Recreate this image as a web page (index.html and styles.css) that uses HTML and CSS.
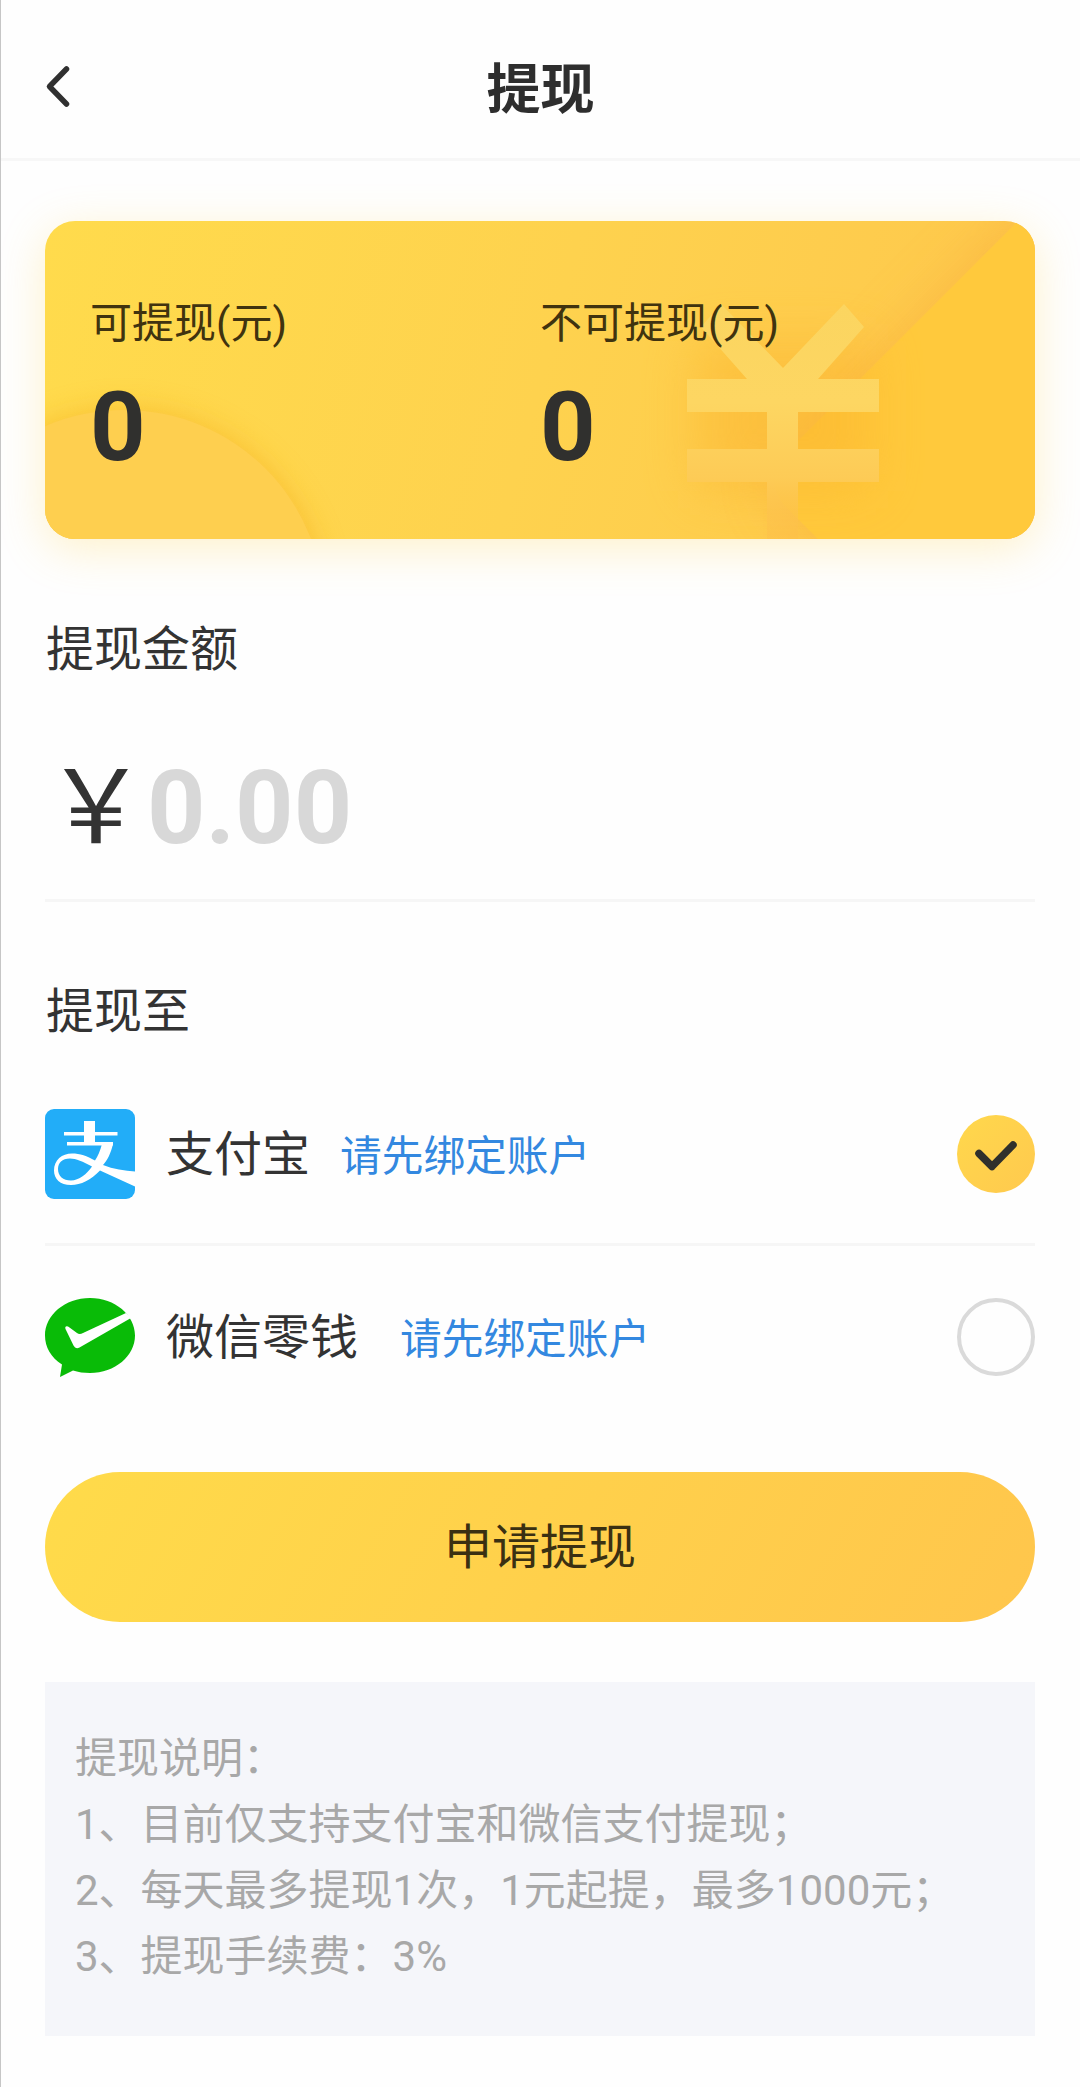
FILE: index.html
```html
<!DOCTYPE html>
<html lang="zh-CN">
<head>
    <meta charset="UTF-8">
    <meta name="viewport" content="width=device-width, initial-scale=1.0">
    <title>提现</title>
    <link rel="stylesheet" href="styles.css">
</head>
<body>
    <header>
        <a href="#" class="back" aria-label="返回">
            <svg width="30" height="46" viewBox="0 0 30 46">
                <path d="M24.500 6 L7.500 23.500 L24.500 41" fill="none" stroke="#303030" stroke-width="5.5" stroke-linecap="round" stroke-linejoin="round"/>
            </svg>
        </a>
        <h1>提现</h1>
    </header>

    <main>
        <section class="balance-card">
            <svg class="card-bg" width="990" height="318" viewBox="0 0 990 318" aria-hidden="true">
                <defs>
                    <linearGradient id="yenFill" x1="0" y1="83" x2="0" y2="318" gradientUnits="userSpaceOnUse">
                        <stop offset="0" stop-color="#fbd560"/>
                        <stop offset="0.42" stop-color="#fdd662"/>
                        <stop offset="0.74" stop-color="#fdcb56"/>
                        <stop offset="1" stop-color="#fdbd48" stop-opacity="0.4"/>
                    </linearGradient>
                    <filter id="soft" x="-30%" y="-30%" width="160%" height="160%">
                        <feGaussianBlur stdDeviation="14"/>
                    </filter>
                    <filter id="wide" x="-40%" y="-40%" width="180%" height="180%">
                        <feGaussianBlur stdDeviation="26"/>
                    </filter>
                    <clipPath id="yen">
                        <polygon points="738,147 799,83 819,106 773,158 702,158 656,106 676,83"/>
                        <rect x="642" y="158" width="192" height="33"/>
                        <rect x="642" y="228" width="192" height="33"/>
                        <rect x="722" y="150" width="31" height="168"/>
                    </clipPath>
                </defs>
                <circle cx="79" cy="389" r="202" fill="#f5ac1c" opacity="0.5" filter="url(#soft)"/>
                <circle cx="79" cy="389" r="200" fill="#fecf4f"/>
                <path d="M970 0 L739 232 Q718 256 739 285 L795 342 L1040 342 L1040 0 Z" fill="#f8a838" opacity="0.5" filter="url(#wide)"/>
                <path d="M973 0 L739 234 Q718 256 739 284 L795 340 L1040 340 L1040 0 Z" fill="#ffc93c"/>
                <rect x="650" y="120" width="176" height="150" fill="#fbb02c" opacity="0.42" filter="url(#wide)"/>
                <rect x="642" y="83" width="192" height="235" fill="url(#yenFill)" clip-path="url(#yen)"/>
            </svg>
            <div class="balance">
                <p>可提现(元)</p>
                <strong>0</strong>
            </div>
            <div class="balance">
                <p>不可提现(元)</p>
                <strong>0</strong>
            </div>
        </section>

        <section class="amount">
            <h2>提现金额</h2>
            <div class="amount-field">
                <span class="currency">￥</span>
                <span class="placeholder">0.00</span>
            </div>
        </section>

        <section class="methods">
            <h2>提现至</h2>
            <div class="method">
                <svg class="method-icon" width="90" height="90" viewBox="0 0 90 90">
                    <rect width="90" height="90" rx="9" fill="#22adf8"/>
                    <path d="M39 12 H50 V35 H39 Z M19 23 H72.5 V26.5 H19 Z M22 33 H68 V36.5 H22 Z" fill="#fff"/>
                    <path d="M57 35 H68 C66 44 62 52 58 56 C68 60 80 62 90 62.500 V77.500 L55 61.500 C46 71 36 76 26 76 C15 76 9 70 9 61.500 C9 51 17 44.500 27 44.500 C35 44.500 42 47 50 51.500 C53 47 55 42 57 35 Z M47 57.500 C38 52.500 31 49.500 25 49.500 C17 49.500 13 54 13 60 C13 67 18 71.500 26 71.500 C34 71.500 42 65 47 57.500 Z" fill="#fff" fill-rule="evenodd"/>
                </svg>
                <span class="method-name">支付宝</span>
                <a href="#" class="bind">请先绑定账户</a>
                <span class="radio checked">
                    <svg width="78" height="78" viewBox="0 0 78 78">
                        <path d="M22 38.500 L35 51.500 L56 30" fill="none" stroke="#30302c" stroke-width="7.500" stroke-linecap="round" stroke-linejoin="round"/>
                    </svg>
                </span>
            </div>
            <div class="method wechat">
                <svg class="method-icon" width="90" height="79" viewBox="0 0 90 79">
                    <path d="M45 0 C70 0 90 17 90 37.500 C90 58 70 75 45 75 C39 75 33 74.200 28 72.500 L15 79 L17 66.500 C6 59.500 0 49 0 37.500 C0 17 20 0 45 0 Z" fill="#09bb07"/>
                    <path d="M20.500 31 C19.500 28 22 27.500 24.500 29.500 L32 35 Q34.500 37 38 35 L81 15 L86 20 L34.500 49.500 Q30.500 51.500 28.500 47.500 Z" fill="#fff"/>
                </svg>
                <span class="method-name">微信零钱</span>
                <a href="#" class="bind">请先绑定账户</a>
                <span class="radio"></span>
            </div>
        </section>

        <button type="button" class="submit">申请提现</button>

        <section class="notes">
            <p>提现说明：</p>
            <p>1、目前仅支持支付宝和微信支付提现；</p>
            <p>2、每天最多提现1次，1元起提，最多1000元；</p>
            <p>3、提现手续费：3%</p>
        </section>
    </main>
</body>
</html>
```
FILE: styles.css
```css
:root {
    --text: #333333;
    --muted: #a8a8a8;
    --line: #f6f6f6;
    --link: #3388e0;
    --note-bg: #f5f6fa;
}

* {
    box-sizing: border-box;
}

body {
    margin: 0;
    min-height: 2087px;
    font-family: Roboto, "Noto Sans CJK SC", sans-serif;
    color: var(--text);
    background-color: #fefefe;
    border-left: 1px solid #c6c6c6;
}

h1, h2, p {
    margin: 0;
}

a {
    text-decoration: none;
}

header {
    display: grid;
    grid-template-columns: 100px 1fr 100px;
    align-items: center;
    height: 161px;
    padding-top: 14px;
    border-bottom: 3px solid #f7f7f7;
}

.back {
    padding-left: 41px;
    line-height: 0;
}

h1 {
    padding-top: 9px;
    font-size: 54px;
    line-height: 80px;
    text-align: center;
    color: #2e2e2e;
}

main {
    padding: 60px 45px 0 44px;
}

.balance-card {
    position: relative;
    display: grid;
    grid-template-columns: 450px 1fr;
    height: 318px;
    padding: 72px 45px 0;
    border-radius: 30px;
    background: linear-gradient(105deg, #ffdb4c, #fed24e 50%, #fec74c);
    box-shadow: 0 10px 45px rgba(255, 208, 70, 0.28);
}

.card-bg {
    position: absolute;
    top: 0;
    left: 0;
    border-radius: 30px;
}

.balance {
    position: relative;
}

.balance p {
    font-size: 42px;
    line-height: 62px;
    color: #40330f;
}

.balance strong {
    display: block;
    margin-top: 15px;
    font-size: 97px;
    line-height: 114px;
    color: #30302e;
}

h2 {
    padding-left: 1px;
    font-size: 48px;
    font-weight: 400;
    line-height: 70px;
}

.amount {
    margin-top: 76px;
    border-bottom: 3px solid var(--line);
}

.amount-field {
    display: flex;
    align-items: baseline;
    height: 214px;
    padding-top: 54px;
    font-size: 102px;
    line-height: 120px;
}

.currency {
    width: 102px;
    text-align: center;
    font-family: "Noto Sans CJK SC", sans-serif;
}

.placeholder {
    font-weight: 700;
    color: #d8d8d8;
}

.methods {
    margin-top: 75px;
}

.methods h2 {
    margin-bottom: 17px;
}

.method {
    display: flex;
    align-items: center;
    height: 182px;
    border-bottom: 3px solid var(--line);
}

.method.wechat {
    border-bottom: none;
}

.method-name {
    margin-left: 31px;
    padding-bottom: 8px;
    font-size: 48px;
}

.bind {
    margin-left: 30px;
    padding-bottom: 2px;
    font-size: 41.7px;
    color: var(--link);
}

.wechat .bind {
    margin-left: 42px;
}

.radio {
    width: 78px;
    height: 78px;
    margin-left: auto;
    border: 4px solid #dadada;
    border-radius: 50%;
}

.radio.checked {
    border: none;
    background: linear-gradient(135deg, #ffd84c, #ffc94e);
}

.submit {
    display: block;
    width: 100%;
    height: 150px;
    margin-top: 44px;
    padding: 0 0 8px;
    border: none;
    border-radius: 75px;
    font-family: inherit;
    font-size: 48px;
    color: #3a3012;
    background: linear-gradient(120deg, #ffdb4a, #ffc64c);
}

.notes {
    height: 354px;
    margin-top: 60px;
    padding: 44px 30px;
    font-size: 42px;
    line-height: 66px;
    color: var(--muted);
    background: var(--note-bg);
}
```
